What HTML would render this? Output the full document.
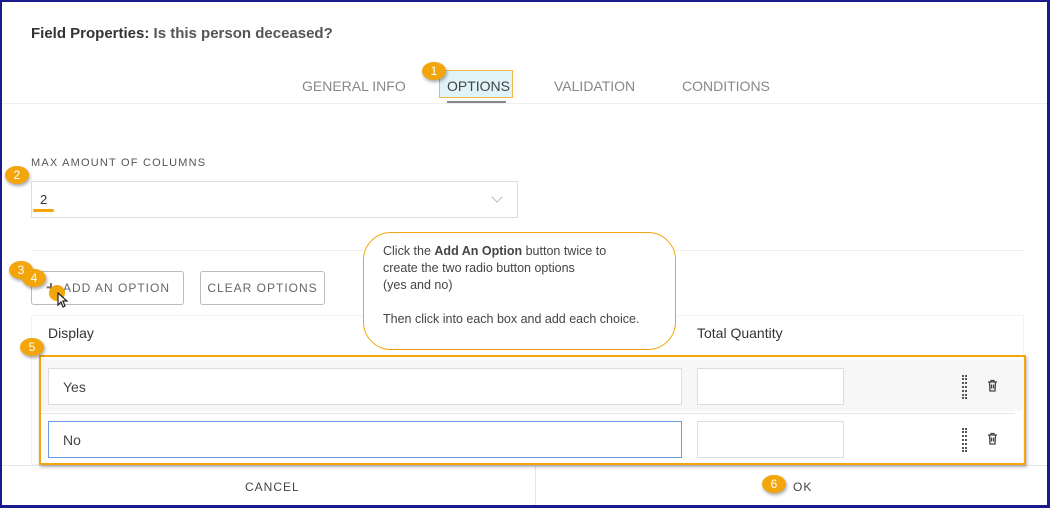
<!DOCTYPE html>
<html><head><style>
*{box-sizing:border-box;margin:0;padding:0}
body{width:1050px;height:508px;overflow:hidden;background:#fff;font-family:"Liberation Sans",sans-serif;position:relative}
.frame{position:absolute;inset:0;border:2px solid #1a1a8c;border-right-width:3px;border-bottom-width:3px;pointer-events:none;z-index:10}
.abs{position:absolute}
.badge{position:absolute;width:24px;height:18px;border-radius:50%;background:#f2a60c;color:#fff;font-size:12px;text-align:center;line-height:18px;box-shadow:1px 2px 3px rgba(0,0,0,.35);z-index:5}
.tab{position:absolute;top:78px;font-size:14px;color:#888;letter-spacing:0}
.btn{position:absolute;top:271px;height:34px;border:1px solid #bbb;border-radius:3px;font-size:12px;color:#666;letter-spacing:1px;line-height:32px;text-align:center}
.inp{position:absolute;background:#fff;border:1px solid #ddd;font-size:14px;color:#444;padding-left:14px;line-height:36px}
</style></head><body>
<div class="frame"></div>
<div class="abs" style="left:31px;top:25px;font-size:15px;font-weight:bold;color:#333">Field Properties: <span style="color:#555">Is this person deceased?</span></div>
<div class="tab" style="left:302px">GENERAL INFO</div>
<div class="abs" style="left:439px;top:70px;width:74px;height:28px;background:#dff3f8;border:1.5px solid #f2b84a"></div>
<div class="tab" style="left:447px;color:#444">OPTIONS</div>
<div class="abs" style="left:447px;top:101px;width:59px;height:2px;background:#888"></div>
<div class="tab" style="left:554px">VALIDATION</div>
<div class="tab" style="left:682px">CONDITIONS</div>
<div class="abs" style="left:2px;top:103px;width:1045px;height:1px;background:#eee"></div>
<div class="badge" style="left:422px;top:62px">1</div>

<div class="abs" style="left:31px;top:157px;font-size:11px;color:#555;letter-spacing:1.2px">MAX AMOUNT OF COLUMNS</div>
<div class="badge" style="left:5px;top:166px">2</div>
<div class="abs" style="left:31px;top:181px;width:487px;height:37px;border:1px solid #ddd"></div>
<div class="abs" style="left:40px;top:192px;font-size:13px;color:#333">2</div>
<div class="abs" style="left:33px;top:209px;width:21px;height:3px;border-radius:2px;background:#f2a60c"></div>
<div class="abs" style="left:493px;top:193px;width:8px;height:8px;border-right:1.5px solid #bbb;border-bottom:1.5px solid #bbb;transform:rotate(45deg)"></div>
<div class="abs" style="left:31px;top:250px;width:993px;height:1px;background:#eee"></div>

<div class="btn" style="left:31px;width:153px;padding-left:18px">ADD AN OPTION</div>
<div class="abs" style="left:46px;top:278px;font-size:17px;font-weight:bold;color:#666;z-index:2">+</div>
<div class="btn" style="left:200px;width:125px">CLEAR OPTIONS</div>
<div class="badge" style="left:9px;top:261px">3</div>
<div class="badge" style="left:22px;top:269px">4</div>
<div class="abs" style="left:49px;top:285px;width:16px;height:16px;border-radius:50%;background:#f2a60c;z-index:4"></div>
<svg class="abs" style="left:57px;top:292px;z-index:6" width="11" height="17" viewBox="0 0 11 17"><path d="M1 1 L1 13 L4 10 L6 15 L8 14 L6 9 L10 9 Z" fill="#fff" stroke="#222" stroke-width="1.2"/></svg>

<div class="abs" style="left:31px;top:315px;width:993px;height:150px;border:1px solid #f2f2f2"></div>
<div class="abs" style="left:48px;top:325px;font-size:14px;color:#333">Display</div>
<div class="abs" style="left:697px;top:325px;font-size:14px;color:#333">Total Quantity</div>
<div class="badge" style="left:20px;top:338px">5</div>
<div class="abs" style="left:41px;top:360px;width:984px;height:51px;background:#f7f7f7"></div>
<div class="abs" style="left:41px;top:413px;width:974px;height:1px;background:#e5e5e5"></div>
<div class="inp" style="left:48px;top:368px;width:634px;height:37px">Yes</div>
<div class="inp" style="left:697px;top:368px;width:147px;height:37px"></div>
<div class="inp" style="left:48px;top:421px;width:634px;height:37px;border-color:#6a9be0">No</div>
<div class="inp" style="left:697px;top:421px;width:147px;height:37px"></div>
<div class="abs" style="left:962px;top:375px;width:5px;height:24px;border-left:2px dotted #555;border-right:2px dotted #555"></div>
<div class="abs" style="left:962px;top:428px;width:5px;height:24px;border-left:2px dotted #555;border-right:2px dotted #555"></div>
<svg class="abs" style="left:987px;top:379px" width="11" height="13" viewBox="0 0 11 13"><path d="M1 3 H10 M4 3 V1.5 H7 V3 M2.5 3 L3 12 H8 L8.5 3 M4.5 5.5 V9.5 M6.5 5.5 V9.5" fill="none" stroke="#444" stroke-width="1.3"/></svg>
<svg class="abs" style="left:987px;top:432px" width="11" height="13" viewBox="0 0 11 13"><path d="M1 3 H10 M4 3 V1.5 H7 V3 M2.5 3 L3 12 H8 L8.5 3 M4.5 5.5 V9.5 M6.5 5.5 V9.5" fill="none" stroke="#444" stroke-width="1.3"/></svg>
<div class="abs" style="left:39px;top:355px;width:987px;height:110px;border:2px solid #f2a60c;box-shadow:1px 2px 3px rgba(0,0,0,.3);z-index:3"></div>

<div class="abs" style="left:2px;top:465px;width:1045px;height:1px;background:#e5e5e5"></div>
<div class="abs" style="left:535px;top:466px;width:1px;height:40px;background:#e5e5e5"></div>
<div class="abs" style="left:245px;top:480px;font-size:12px;color:#444;letter-spacing:1px">CANCEL</div>
<div class="abs" style="left:793px;top:480px;font-size:12px;color:#444;letter-spacing:1px">OK</div>
<div class="badge" style="left:762px;top:475px">6</div>

<div class="abs" style="left:363px;top:232px;width:313px;height:118px;border:1.5px solid #f2a60c;border-radius:28px;background:#fff;font-size:12.5px;color:#444;line-height:17px;padding:10px 0 0 19px;z-index:4">Click the <b>Add An Option</b> button twice to<br>create the two radio button options<br>(yes and no)<br><br>Then click into each box and add each choice.</div>
</body></html>
